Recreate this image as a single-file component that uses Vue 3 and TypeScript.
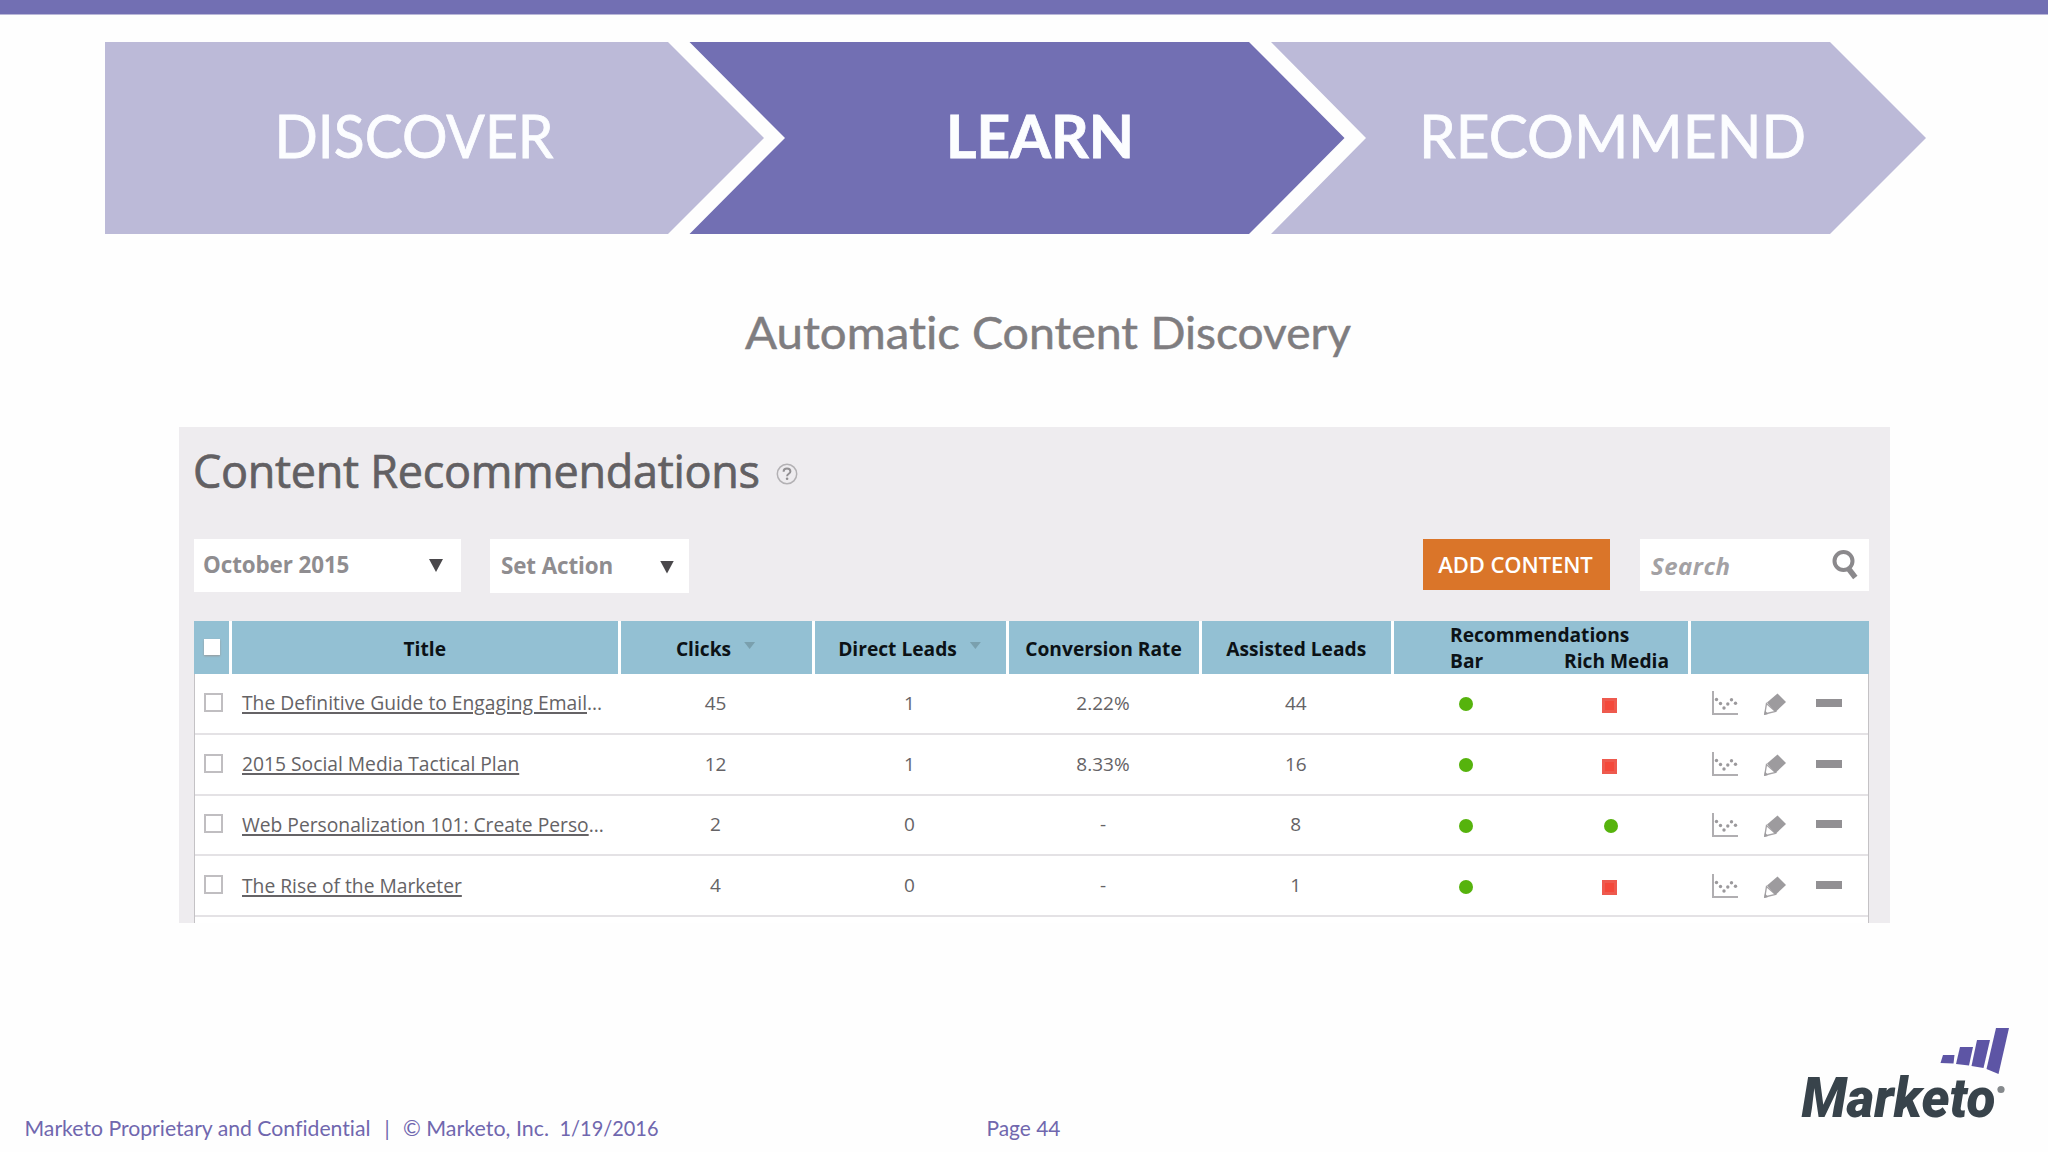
<script setup lang="ts">
interface Row {
  title: string
  truncated: boolean
  clicks: string
  direct: string
  rate: string
  assisted: string
  bar: boolean
  rich: boolean
}

const rows: Row[] = [
  { title: 'The Definitive Guide to Engaging Email', truncated: true, clicks: '45', direct: '1', rate: '2.22%', assisted: '44', bar: true, rich: false },
  { title: '2015 Social Media Tactical Plan', truncated: false, clicks: '12', direct: '1', rate: '8.33%', assisted: '16', bar: true, rich: false },
  { title: 'Web Personalization 101: Create Perso', truncated: true, clicks: '2', direct: '0', rate: '-', assisted: '8', bar: true, rich: true },
  { title: 'The Rise of the Marketer', truncated: false, clicks: '4', direct: '0', rate: '-', assisted: '1', bar: true, rich: false },
]
</script>

<template>
  <div class="slide">
    <div class="topbar"></div>
    <svg class="steps" width="2048" height="192" viewBox="0 42 2048 192">
      <polygon class="soft" points="105,42 668,42 764,138 668,234 105,234" />
      <polygon class="strong" points="689.5,42 1249,42 1344.5,138 1249,234 689.5,234 785,138" />
      <polygon class="soft" points="1271,42 1830,42 1926,138 1830,234 1271,234 1366,138" />
      <text x="274.5" y="158" textLength="279" lengthAdjust="spacingAndGlyphs">DISCOVER</text>
      <text class="bold" x="946" y="158" textLength="188" lengthAdjust="spacingAndGlyphs">LEARN</text>
      <text x="1419" y="158" textLength="387" lengthAdjust="spacingAndGlyphs">RECOMMEND</text>
    </svg>
    <svg class="subtitle" width="2048" height="80" viewBox="0 300 2048 80">
      <text x="745" y="348.5" textLength="215" lengthAdjust="spacingAndGlyphs">Automatic</text>
      <text x="972" y="348.5" textLength="166" lengthAdjust="spacingAndGlyphs">Content</text>
      <text x="1150.500" y="348.5" textLength="200.500" lengthAdjust="spacingAndGlyphs">Discovery</text>
    </svg>

    <section class="panel">
      <header class="heading">
        <h1>Content Recommendations</h1>
        <svg class="help" width="22" height="22" viewBox="0 0 22 22">
          <circle cx="11" cy="11" r="9.7" fill="none" stroke="#b3b1b4" stroke-width="1.5" />
          <path d="M7.6 8.8c0-2 1.4-3.2 3.4-3.2s3.4 1.1 3.4 2.9c0 2.3-3.3 2.3-3.3 4.7" fill="none" stroke="#929093" stroke-width="2" />
          <circle cx="11.1" cy="15.8" r="1.3" fill="#929093" />
        </svg>
      </header>

      <div class="toolbar">
        <div class="select month"><span>October 2015</span><i class="caret"></i></div>
        <div class="select action"><span>Set Action</span><i class="caret"></i></div>
        <button class="add">ADD CONTENT</button>
        <div class="search">
          <span>Search</span>
          <svg width="28" height="34" viewBox="0 0 28 34">
            <circle cx="12.5" cy="13" r="9" fill="none" stroke="#8b898c" stroke-width="4" />
            <path d="M17 20l7.3 9.5" stroke="#8b898c" stroke-width="5.5" />
          </svg>
        </div>
      </div>

      <div class="table">
        <div class="row head">
          <div class="th"><i class="allbox"></i></div>
          <div class="th">Title</div>
          <div class="th sortable"><span>Clicks</span><i class="sort"></i></div>
          <div class="th sortable"><span>Direct Leads</span><i class="sort"></i></div>
          <div class="th">Conversion Rate</div>
          <div class="th">Assisted Leads</div>
          <div class="th recs">
            <div>Recommendations</div>
            <div class="pair"><span>Bar</span><span>Rich Media</span></div>
          </div>
          <div class="th"></div>
        </div>
        <div v-for="row in rows" :key="row.title" class="row body">
          <div class="cell check"><i class="box"></i></div>
          <div class="cell title"><a>{{ row.title }}</a><span v-if="row.truncated">...</span></div>
          <div class="cell num">{{ row.clicks }}</div>
          <div class="cell num">{{ row.direct }}</div>
          <div class="cell num">{{ row.rate }}</div>
          <div class="cell num">{{ row.assisted }}</div>
          <div class="cell marks">
            <i :class="row.bar ? 'on' : 'off'"></i>
            <i :class="row.rich ? 'on' : 'off'"></i>
          </div>
          <div class="cell icons">
            <svg width="28" height="26" viewBox="0 0 28 26" fill="none">
              <path d="M2 1v23h25" stroke="#b0aeb1" stroke-width="2" />
              <g fill="#9b999c">
                <circle cx="5.5" cy="9.5" r="1.7" />
                <circle cx="9.5" cy="13.5" r="1.7" />
                <circle cx="13" cy="18" r="1.7" />
                <circle cx="16.8" cy="14" r="1.7" />
                <circle cx="20.5" cy="9.7" r="1.7" />
                <circle cx="24.5" cy="13.2" r="1.7" />
              </g>
            </svg>
            <svg width="24" height="24" viewBox="0 0 24 24">
              <path d="M3.5 11.5L1.8 22 12.5 19.5z" fill="#fff" stroke="#a5a3a6" stroke-width="1.4" />
              <path d="M14.5 1.5L23 10 12.5 20 4 10.5z" fill="#9d9b9e" />
              <path d="M1 23l1-4.5 3.2 3.4z" fill="#9d9b9e" />
            </svg>
            <i class="minus"></i>
          </div>
        </div>
        <div class="rest"></div>
      </div>
    </section>

    <footer>
      <svg width="2048" height="152" viewBox="0 1000 2048 152">
        <g class="foot">
          <text x="24.5" y="1135.5" textLength="346" lengthAdjust="spacingAndGlyphs">Marketo Proprietary and Confidential</text>
          <text x="384.5" y="1135.5">|</text>
          <text x="403" y="1135.5" textLength="146" lengthAdjust="spacingAndGlyphs">© Marketo, Inc.</text>
          <text x="559.5" y="1135.5" textLength="99" lengthAdjust="spacingAndGlyphs">1/19/2016</text>
          <text x="986.5" y="1135.5" textLength="74" lengthAdjust="spacingAndGlyphs">Page 44</text>
        </g>
        <g fill="#5d55a5">
          <polygon points="1943,1055 1954.5,1055 1953.5,1063.5 1940.5,1063" />
          <polygon points="1960,1047 1973,1047 1969,1065.5 1956,1064" />
          <polygon points="1977,1040 1990,1040 1983.5,1068 1971.5,1066" />
          <polygon points="1996,1028 2009,1028 1998.5,1074 1986.5,1069" />
        </g>
        <text class="brand" x="1801.5" y="1117" textLength="194" lengthAdjust="spacingAndGlyphs">Marketo</text>
        <circle cx="2001" cy="1089.5" r="3.6" fill="#85898c" />
      </svg>
    </footer>
  </div>
</template>

<style>
body { margin: 0; background: #fefefe; }
</style>

<style scoped>
.slide { width: 2048px; height: 1152px; overflow: hidden; background: #fefefe; font-family: "Open Sans", sans-serif; display: flex; flex-direction: column; }
.slide svg { display: block; flex: none; }
.slide svg text { font-variant-ligatures: none; }
.topbar { flex: none; height: 14px; background: #726fb3; border-bottom: 1px solid #b9b7d8; margin-bottom: 27px; }
.steps text { font: 60px Lato, sans-serif; fill: #fcfdff; stroke: #fcfdff; stroke-width: 0.8px; }
.steps .bold { font-weight: 700; }
.soft { fill: #bcbad8; }
.strong { fill: #726fb3; }
.subtitle { margin-top: 66px; }
.subtitle text { font: 45px Lato, sans-serif; fill: #7f7d80; stroke: #7f7d80; stroke-width: 0.5px; }
.panel { flex: none; box-sizing: border-box; width: 1711px; height: 496px; margin: 47px 0 0 179px; padding: 0 21px 0 15px; background: #eeecef; display: flex; flex-direction: column; }
.heading { height: 112px; display: flex; }
h1 { margin: 12px 0 0 -1px; font-size: 45px; line-height: 64px; font-weight: 400; letter-spacing: -0.3px; -webkit-text-stroke: 0.7px #626063; color: #626063; width: 583px; white-space: nowrap; }
.help { margin-top: 36px; }
.toolbar { display: flex; align-items: flex-start; height: 82px; font-size: 22.4px; font-weight: 700; }
.select { background: #fff; color: #8f8d90; display: flex; align-items: center; justify-content: space-between; box-sizing: border-box; padding-left: 9px; white-space: nowrap; }
.select span { position: relative; top: -1px; letter-spacing: -0.1px; }
.month { width: 267px; height: 53px; padding-right: 18px; }
.action { width: 199px; height: 54px; margin-left: 29px; padding-left: 11px; padding-right: 15px; }
.action .caret { margin-top: 2px; }
.caret { width: 14px; height: 13px; background: #4a484b; clip-path: polygon(0 0, 100% 0, 50% 100%); }
.add { margin: 0 30px 0 auto; border: 0; padding: 0 2px 1px 0; width: 187px; height: 51px; background: #da7529; color: #fff; font: 600 22px "Open Sans", sans-serif; letter-spacing: -0.1px; white-space: nowrap; }
.search { width: 229px; height: 52px; box-sizing: border-box; padding: 0 10px 0 11px; background: #fff; display: flex; align-items: center; justify-content: space-between; font-size: 24px; font-style: italic; letter-spacing: 0.5px; color: #a3a1a4; }
.table { flex: 1; display: flex; flex-direction: column; }
.row { display: grid; grid-template-columns: 38px 388.5px 194px 194px 193px 192.5px 297px 1fr; }
.head { height: 53px; background: #93c0d3; color: #0c1216; font-weight: 700; font-size: 19.2px; }
.th { display: flex; align-items: center; justify-content: center; border-right: 3px solid #fff; white-space: nowrap; padding-top: 1px; }
.th:last-child { border-right: 0; }
.allbox { width: 16px; height: 16px; background: #fff; box-shadow: 0 1px 2px #999; margin-top: -2px; }
.sortable { gap: 13px; padding-right: 1px; }
.sort { width: 11px; height: 7px; background: #7aa0ae; clip-path: polygon(0 0, 100% 0, 50% 100%); margin-top: -5px; }
.recs { display: block; padding-left: 56px; line-height: 26px; }
.pair { display: flex; justify-content: space-between; padding-right: 19px; }
.body { box-sizing: border-box; height: 60.8px; background: #fff; border: 1px solid #c4c2c5; border-width: 0 1px; box-shadow: inset 0 -2px #e4e2e5; color: #656366; font-size: 19px; }
.cell { display: flex; align-items: center; justify-content: center; padding-bottom: 3px; white-space: nowrap; }
.num { padding-right: 6px; }
.box { width: 15px; height: 15px; border: 2px solid #c0bec1; margin: -1px 2px 0 0; }
.title { justify-content: flex-start; padding-left: 9px; font-size: 19.25px; }
.title a { text-decoration: underline; text-underline-offset: 2px; text-decoration-thickness: 1.5px; }
.marks { justify-content: flex-start; }
.on { width: 14px; height: 14px; border-radius: 50%; background: #56b30d; margin-left: 64px; margin-top: 3px; }
.off { width: 15px; height: 15px; background: #f4483a; box-shadow: inset 0 0 0 3px #ee5a4e; margin-top: 5px; margin-left: 129px; }
.on + .on { margin-left: 131px; }
.icons { justify-content: flex-start; padding-left: 19px; }
.icons svg { margin-top: 1px; }
.icons svg + svg { margin-left: 24px; margin-top: 3px; }
.minus { width: 26px; height: 8px; background: #929093; margin-left: 29px; }
.rest { flex: 1; background: #fff; border: 1px solid #c4c2c5; border-width: 0 1px; }
footer { margin-top: auto; height: 152px; }
.foot { font: 20.5px Lato, sans-serif; fill: #7067ae; }
.brand { font: italic 900 56px Roboto, sans-serif; fill: #38434b; }
</style>
